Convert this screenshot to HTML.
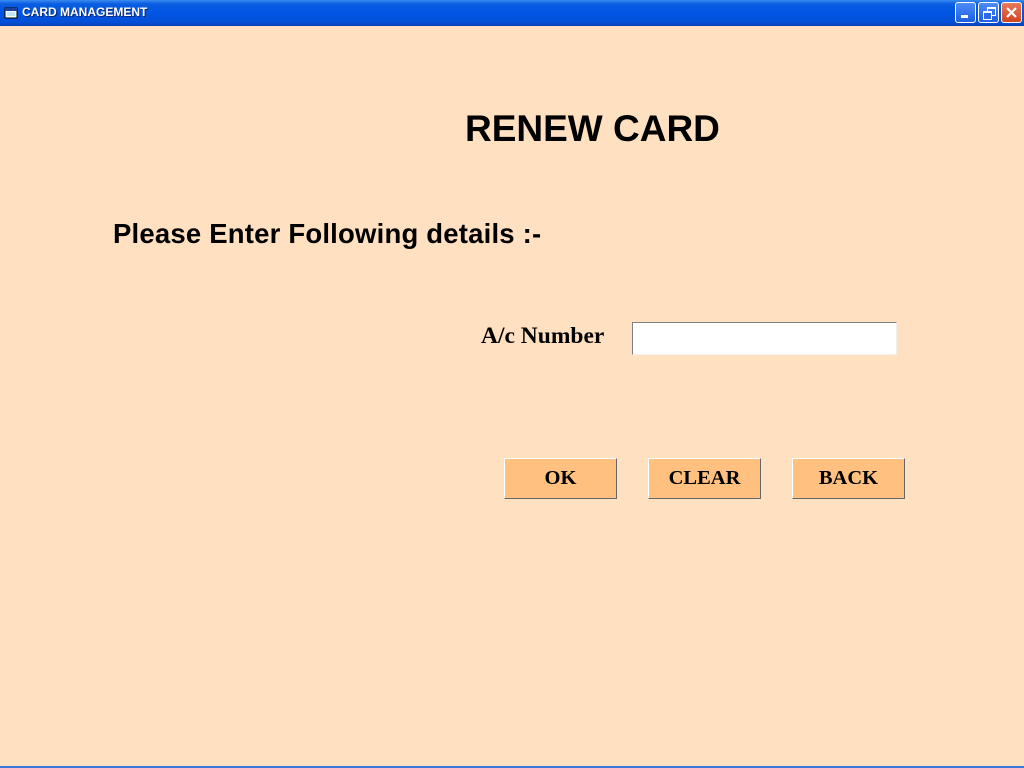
<!DOCTYPE html>
<html><head><style>
body{margin:0;width:1024px;height:768px;overflow:hidden;background:#FFE0C0;position:relative;font-family:"Liberation Sans",sans-serif}
.tb{position:absolute;left:0;top:0;width:1024px;height:26px;background:linear-gradient(#3a8cf0 0%,#0a5ee0 15%,#0054e3 50%,#0450d8 85%,#0a3fb8 100%)}
.tb .t{position:absolute;left:22px;top:5px;color:#fff;font:bold 12px "Liberation Sans",sans-serif;text-shadow:1px 1px #0a246a}
.btn{position:absolute;top:2px;width:21px;height:21px;border:1px solid #fff;border-radius:3px;box-sizing:border-box;background:linear-gradient(#4d8cf5,#1d5fe0)}
.bottom{position:absolute;left:0;bottom:0;width:1024px;height:2px;background:#3a78d8}
.abs{position:absolute;white-space:nowrap}
.b{position:absolute;top:458px;width:113px;height:41px;box-sizing:border-box;background:#FFC080;border:1px solid;border-color:#fff #666 #666 #fff;font:bold 20.5px "Liberation Serif",serif;text-align:center;line-height:39px;color:#000}
</style></head><body>
<div class="tb">
<svg style="position:absolute;left:4px;top:7px" width="14" height="12"><rect x="1" y="1" width="12" height="10" fill="#fff" stroke="#000"/><rect x="1" y="1" width="12" height="3" fill="#1e3f9c"/><rect x="3" y="5" width="8" height="4" fill="#bfe8ff"/></svg>
<div class="t">CARD MANAGEMENT</div>
<div class="btn" style="left:955px"><div style="position:absolute;left:5px;top:12px;width:7px;height:3px;background:#fff"></div></div>
<div class="btn" style="left:978px"><div style="position:absolute;left:8px;top:4px;width:7px;height:6px;border:1px solid #fff;border-top-width:2px"></div><div style="position:absolute;left:4px;top:8px;width:7px;height:6px;border:1px solid #fff;border-top-width:2px;background:#2d6ae6"></div></div>
<div class="btn" style="left:1001px;background:linear-gradient(#e77a5c,#d2441f)"><svg width="19" height="19" style="position:absolute;left:0;top:0"><path d="M5 5L14 14M14 5L5 14" stroke="#fff" stroke-width="2.2"/></svg></div>
</div>
<div class="abs" style="left:465px;top:108px;font:bold 37px 'Liberation Sans',sans-serif">RENEW CARD</div>
<div class="abs" style="left:113px;top:218px;font:bold 27.5px 'Liberation Sans',sans-serif;letter-spacing:0.2px">Please Enter Following details :-</div>
<div class="abs" style="left:481px;top:323px;font:bold 23.5px 'Liberation Serif',serif">A/c Number</div>
<div style="position:absolute;left:632px;top:322px;width:265px;height:33px;box-sizing:border-box;background:#fff;border:1px solid;border-color:#808080 #f0f0f0 #f0f0f0 #808080"></div>
<div class="b" style="left:504px">OK</div>
<div class="b" style="left:648px">CLEAR</div>
<div class="b" style="left:792px">BACK</div>
<div class="bottom"></div>
</body></html>
